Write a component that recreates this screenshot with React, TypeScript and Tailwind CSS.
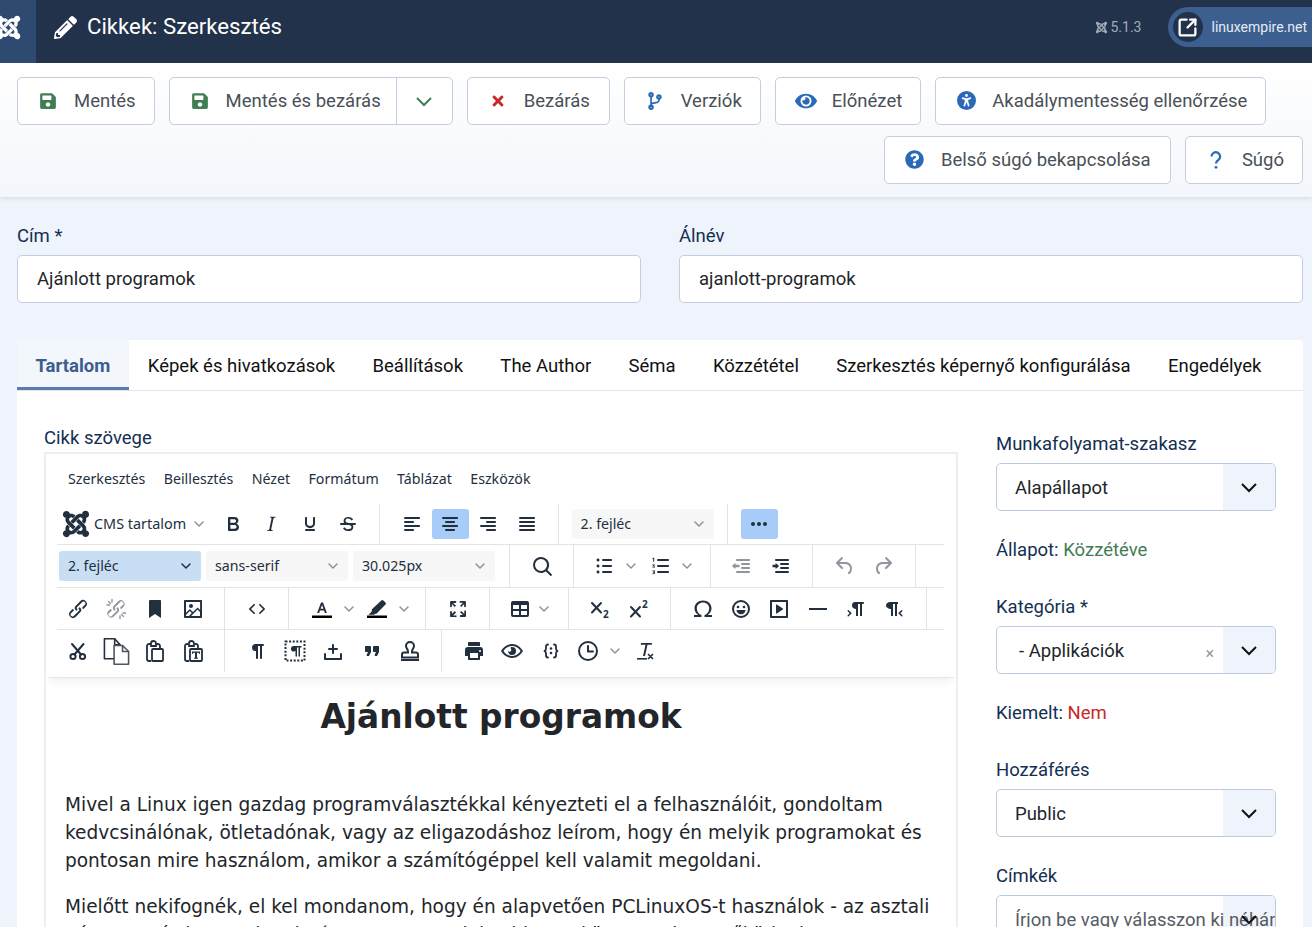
import type {ReactNode} from "react";
import {
    FaJoomla,
    FaPencilAlt,
    FaSave,
    FaTimes,
    FaCodeBranch,
    FaEye,
    FaQuestionCircle,
} from "react-icons/fa";
import {FaUniversalAccess} from "react-icons/fa6";
import {SquareArrowOutUpRight} from "lucide-react";

const INK = "#222f3e";

function Svg({children, size = 24, className}: { children: ReactNode; size?: number; className?: string }) {
    return (
        <svg width={size} height={size} viewBox="0 0 24 24" fill={INK} className={className}>
            {children}
        </svg>
    );
}

function Line({d, w = 2}: { d: string; w?: number }) {
    return <path d={d} fill="none" stroke={INK} strokeWidth={w} strokeLinecap="round" strokeLinejoin="round"/>;
}

const icons: Record<string, ReactNode> = {
    bold: <path d="M7.8 19c-.3 0-.5 0-.6-.2l-.2-.5V5.700c0-.2 0-.4.2-.5l.6-.2h5c1.500 0 2.700.3 3.500 1 .7.6 1.100 1.400 1.100 2.500a3 3 0 0 1-.6 1.900c-.4.6-1 1-1.600 1.200.4.1.9.3 1.300.6s.8.7 1 1.200c.4.4.5 1 .5 1.600 0 1.300-.4 2.300-1.300 3-.8.7-2.100 1-3.800 1H7.800Zm5-8.300c.6 0 1.200-.1 1.600-.5.4-.3.6-.7.6-1.300 0-1.100-.8-1.700-2.300-1.700H9.300v3.500h3.400Zm.5 6c.7 0 1.300-.1 1.700-.4.4-.4.6-.9.6-1.500s-.2-1-.7-1.400c-.4-.3-1-.4-2-.4H9.400v3.800h4Z"/>,
    italic: <path d="M16.700 4.700l-.1.9h-.3c-.6 0-1 0-1.400.3-.3.3-.4.6-.5 1.100l-2.100 9.800v.6c0 .5.400.8 1.400.8h.2l-.2.8H8l.2-.8h.2c1.100 0 1.800-.5 2-1.500l2-9.800.1-.5c0-.6-.4-.8-1.400-.8h-.3l.2-.9h5.800Z"/>,
    underline: <path d="M16 5c.6 0 1 .4 1 1v5.500a4 4 0 0 1-.4 1.800l-1 1.400a5.300 5.300 0 0 1-5.500 1 5 5 0 0 1-1.600-1c-.5-.4-.8-.9-1.100-1.400a4 4 0 0 1-.4-1.800V6c0-.6.4-1 1-1s1 .4 1 1v5.500c0 .3 0 .6.2 1l.6.7a3.300 3.300 0 0 0 2.200.8 3.400 3.400 0 0 0 2.200-.8c.3-.2.4-.5.6-.8l.2-.9V6c0-.6.4-1 1-1ZM8 17h8c.6 0 1 .4 1 1s-.4 1-1 1H8a1 1 0 0 1 0-2Z"/>,
    strike: <path d="M15.600 8.500c-.5-.7-1-1.100-1.300-1.300-.6-.4-1.300-.6-2-.6-2.700 0-2.800 1.700-2.800 2.100 0 1.600 1.800 2 3.200 2.300 4.400.9 4.600 2.800 4.600 3.900 0 1.400-.7 4.100-5 4.100A6.200 6.200 0 0 1 7 16.400l1.500-1.100c.4.6 1.600 2 3.700 2 1.600 0 2.500-.4 3-1.200.4-.8.3-2-.8-2.600-.7-.4-1.600-.7-2.900-1-1-.2-3.900-.8-3.900-3.600C7.600 6 10.300 5 12.400 5c2.900 0 4.200 1.600 4.700 2.400l-1.500 1.100Z M5 11h14a1 1 0 0 1 0 2H5a1 1 0 0 1 0-2Z"/>,
    alignLeft: <path d="M5 5h14c.6 0 1 .4 1 1s-.4 1-1 1H5a1 1 0 1 1 0-2Zm0 4h8c.6 0 1 .4 1 1s-.4 1-1 1H5a1 1 0 1 1 0-2Zm0 8h8c.6 0 1 .4 1 1s-.4 1-1 1H5a1 1 0 0 1 0-2Zm0-4h14c.6 0 1 .4 1 1s-.4 1-1 1H5a1 1 0 0 1 0-2Z"/>,
    alignCenter: <path d="M5 5h14c.6 0 1 .4 1 1s-.4 1-1 1H5a1 1 0 1 1 0-2Zm3 4h8c.6 0 1 .4 1 1s-.4 1-1 1H8a1 1 0 1 1 0-2Zm0 8h8c.6 0 1 .4 1 1s-.4 1-1 1H8a1 1 0 0 1 0-2Zm-3-4h14c.6 0 1 .4 1 1s-.4 1-1 1H5a1 1 0 0 1 0-2Z"/>,
    alignRight: <path d="M5 5h14c.6 0 1 .4 1 1s-.4 1-1 1H5a1 1 0 1 1 0-2Zm6 4h8c.6 0 1 .4 1 1s-.4 1-1 1h-8a1 1 0 0 1 0-2Zm0 8h8c.6 0 1 .4 1 1s-.4 1-1 1h-8a1 1 0 0 1 0-2Zm-6-4h14c.6 0 1 .4 1 1s-.4 1-1 1H5a1 1 0 0 1 0-2Z"/>,
    justify: <path d="M5 5h14c.6 0 1 .4 1 1s-.4 1-1 1H5a1 1 0 1 1 0-2Zm0 4h14c.6 0 1 .4 1 1s-.4 1-1 1H5a1 1 0 1 1 0-2Zm0 4h14c.6 0 1 .4 1 1s-.4 1-1 1H5a1 1 0 0 1 0-2Zm0 4h14c.6 0 1 .4 1 1s-.4 1-1 1H5a1 1 0 0 1 0-2Z"/>,
    more: <path d="M6 10a2 2 0 0 0-2 2c0 1.100.9 2 2 2a2 2 0 0 0 2-2 2 2 0 0 0-2-2Zm12 0a2 2 0 0 0-2 2c0 1.100.9 2 2 2a2 2 0 0 0 2-2 2 2 0 0 0-2-2Zm-6 0a2 2 0 0 0-2 2c0 1.100.9 2 2 2a2 2 0 0 0 2-2 2 2 0 0 0-2-2Z"/>,
    search: <path fillRule="evenodd" d="M16 17.300a8 8 0 1 1 1.400-1.400l4.300 4.400a1 1 0 0 1-1.400 1.400l-4.400-4.300Zm-5-.3a6 6 0 1 0 0-12 6 6 0 0 0 0 12Z"/>,
    bullist: <path d="M11 5h8c.6 0 1 .4 1 1s-.4 1-1 1h-8a1 1 0 0 1 0-2Zm0 6h8c.6 0 1 .4 1 1s-.4 1-1 1h-8a1 1 0 0 1 0-2Zm0 6h8c.6 0 1 .4 1 1s-.4 1-1 1h-8a1 1 0 0 1 0-2ZM4.500 6c0-.4.1-.8.4-1 .3-.4.7-.5 1.100-.5s.8.1 1 .4c.4.3.5.7.5 1.100s-.1.8-.4 1c-.3.4-.7.5-1.100.5s-.8-.1-1-.4c-.4-.3-.5-.7-.5-1.100Zm0 6c0-.4.1-.8.4-1 .3-.4.7-.5 1.100-.5s.8.1 1 .4c.4.3.5.7.5 1.100s-.1.8-.4 1c-.3.4-.7.5-1.100.5s-.8-.1-1-.4c-.4-.3-.5-.7-.5-1.100Zm0 6c0-.4.1-.8.4-1 .3-.4.7-.5 1.100-.5s.8.1 1 .4c.4.3.5.7.5 1.100s-.1.8-.4 1c-.3.4-.7.5-1.100.5s-.8-.1-1-.4c-.4-.3-.5-.7-.5-1.100Z"/>,
    numlist: <>
        <path d="M10 17h10c.6 0 1 .4 1 1s-.4 1-1 1H10a1 1 0 0 1 0-2Zm0-6h10c.6 0 1 .4 1 1s-.4 1-1 1H10a1 1 0 0 1 0-2Zm0-6h10c.6 0 1 .4 1 1s-.4 1-1 1H10a1 1 0 1 1 0-2Z"/>
        <path d="M5.200 3.800h1v4h-1V5l-.8.3v-.8l.8-.5ZM4.300 10.500h2.800v.8H5.700l1.300 1.400v.8H4.300v-.8h1.700L4.300 11Zm0 6h2.800v.8l-1 .8c.7 0 1 .4 1 1 0 .7-.6 1.100-1.500 1.100H4.300v-.8h1.300c.3 0 .5-.1.500-.3s-.2-.3-.5-.3H5v-.7l1-.8H4.300Z"/>
    </>,
    outdent: <path d="M7 5h12c.6 0 1 .4 1 1s-.4 1-1 1H7a1 1 0 1 1 0-2Zm5 4h7c.6 0 1 .4 1 1s-.4 1-1 1h-7a1 1 0 0 1 0-2Zm0 4h7c.6 0 1 .4 1 1s-.4 1-1 1h-7a1 1 0 0 1 0-2Zm-5 4h12a1 1 0 0 1 0 2H7a1 1 0 0 1 0-2Zm-2.300-2.400L2.400 12.500a.7.7 0 0 1 0-1l2.300-2.100c.3-.3.8-.1.8.3v1h4v2.600h-4v1c0 .4-.5.6-.8.3Z"/>,
    indent: <path d="M7 5h12c.6 0 1 .4 1 1s-.4 1-1 1H7a1 1 0 1 1 0-2Zm5 4h7c.6 0 1 .4 1 1s-.4 1-1 1h-7a1 1 0 0 1 0-2Zm0 4h7c.6 0 1 .4 1 1s-.4 1-1 1h-7a1 1 0 0 1 0-2Zm-5 4h12a1 1 0 0 1 0 2H7a1 1 0 0 1 0-2Zm.300-2.400l2.300-2.100a.7.7 0 0 0 0-1L7.300 9.400c-.3-.3-.8-.1-.8.3v1h-3v2.600h3v1c0 .4.500.6.800.3Z"/>,
    undo: <path d="M6.400 8H12c3.700 0 6.200 2 6.800 5.100.6 2.700-.4 5.600-2.300 6.800a1 1 0 0 1-1-1.800c1.100-.6 1.800-2.700 1.400-4.600-.5-2.100-2.100-3.500-4.900-3.500H6.400l3.300 3.300a1 1 0 1 1-1.400 1.400l-5-5a1 1 0 0 1 0-1.400l5-5a1 1 0 0 1 1.400 1.400L6.400 8Z"/>,
    redo: <path d="M17.600 8H12c-3.700 0-6.200 2-6.800 5.100-.6 2.700.4 5.600 2.300 6.800a1 1 0 0 0 1-1.800c-1.100-.6-1.800-2.700-1.400-4.600.5-2.100 2.100-3.500 4.900-3.500h5.600l-3.300 3.300a1 1 0 1 0 1.400 1.400l5-5a1 1 0 0 0 0-1.400l-5-5a1 1 0 0 0-1.400 1.400L17.600 8Z"/>,
    link: <path d="M6.200 12.300a1 1 0 0 1 1.400 1.400l-2 2a2 2 0 1 0 2.600 2.800l4.800-4.800a1 1 0 0 0 0-1.400 1 1 0 1 1 1.400-1.300 2.900 2.900 0 0 1 0 4L9.600 20a3.900 3.900 0 0 1-5.500-5.500l2-2Zm11.600-.6a1 1 0 0 1-1.400-1.400l2-2a2 2 0 1 0-2.600-2.800L11 10.300a1 1 0 0 0 0 1.400A1 1 0 1 1 9.600 13a2.900 2.900 0 0 1 0-4L14.400 4a3.900 3.900 0 0 1 5.500 5.500l-2 2Z"/>,
    unlink: <g opacity="0.5">
        <path d="M6.200 12.300a1 1 0 0 1 1.400 1.400l-2.100 2a2 2 0 1 0 2.700 2.800l4.800-4.800a1 1 0 0 0 0-1.400 1 1 0 1 1 1.400-1.300c1 1.100 1 2.900 0 4l-4.900 4.800a3.900 3.900 0 0 1-5.400-5.500l2-2Zm11.600-.6a1 1 0 0 1-1.400-1.400l2.100-2a2 2 0 1 0-2.700-2.800L11 10.300a1 1 0 0 0 0 1.400A1 1 0 1 1 9.600 13c-1-1.100-1-2.900 0-4L14.400 4a3.900 3.900 0 0 1 5.400 5.500l-2 2Z"/>
        <Line d="M3 8h2.500M8 2.500V5M4.500 4.500L6.500 6.500M17.500 17.500l2 2M16 21.500V19M21.500 16H19" w={1.400}/>
    </g>,
    bookmark: <path d="M6 4v17l6-4 6 4V4c0-.6-.4-1-1-1H7a1 1 0 0 0-1 1Z"/>,
    image: <path fillRule="evenodd" d="M5 15.700l3.300-3.200c.3-.3.7-.3 1 0L12 15l4.100-4c.3-.4.8-.4 1 0l2 1.900V5H5v10.700ZM5 18v1h3l2.800-2.900-2-2L5 17.900Zm14-3l-2.500-2.400-6.400 6.500H19v-4ZM4 3h16c.6 0 1 .4 1 1v16c0 .6-.4 1-1 1H4a1 1 0 0 1-1-1V4c0-.6.4-1 1-1Zm6 8a2 2 0 1 0 0-4 2 2 0 0 0 0 4Z"/>,
    code: <path d="M9.800 15.700c.3.3.3.8 0 1-.3.4-.9.4-1.200 0l-4.400-4.100a.8.8 0 0 1 0-1.200l4.400-4.200c.3-.3.9-.3 1.200 0 .3.3.3.8 0 1.100L6 12l3.800 3.700ZM14.200 15.700c-.3.3-.3.8 0 1 .4.4.9.4 1.200 0l4.400-4.100c.3-.3.3-.9 0-1.200l-4.400-4.200a.8.8 0 0 0-1.200 0c-.3.3-.3.8 0 1.100L18 12l-3.800 3.700Z"/>,
    textColor: <>
        <path fillRule="evenodd" d="M14 13.500H10l-.9 2.400H7.100L11 5.500h2l3.900 10.400h-2L14 13.500Zm-3.400-1.700h2.800L12 8l-1.400 3.800Z"/>
        <rect x="2" y="18.500" width="20" height="2.500" fill="#000"/>
    </>,
    highlight: <>
        <path d="M16.300 3.400a1.400 1.400 0 0 1 2 0l2.200 2.200a1.400 1.400 0 0 1 0 2l-8.800 8.900c-.4.3-1 .4-1.400.2L9 17.800H3.500l3.200-3.200.1-1.500c0-.4.1-.8.4-1.100l9.100-8.600Z"/>
        <rect x="2" y="18.500" width="20" height="2.500" fill="#000"/>
    </>,
    fullscreen: <path d="M15.300 10l-1.200-1.300 2.900-3h-2.300a.9.9 0 1 1 0-1.700H19c.5 0 .9.400.9.900v4.400a.9.900 0 1 1-1.800 0V7l-2.900 3Zm0 4l3 3v-2.300a.9.900 0 1 1 1.700 0V19c0 .5-.4.900-.9.900h-4.400a.9.900 0 1 1 0-1.800H17l-3-2.900 1.300-1.200ZM10 15.400l-2.900 3h2.300a.9.900 0 1 1 0 1.700H5a.9.900 0 0 1-.9-.9v-4.400a.9.900 0 1 1 1.800 0V17l2.900-3 1.200 1.400ZM5.900 7v2.300a.9.900 0 0 1-1.800 0V5c0-.5.400-.9.900-.9h4.400a.9.900 0 1 1 0 1.800H7l3 2.900L8.700 10 5.900 7Z"/>,
    table: <path fillRule="evenodd" d="M19 4a2 2 0 0 1 2 2v12a2 2 0 0 1-2 2H5a2 2 0 0 1-2-2V6c0-1.100.9-2 2-2h14ZM5 14v4h6v-4H5Zm14 0h-6v4h6v-4Zm0-6h-6v4h6V8ZM5 12h6V8H5v4Z"/>,
    sub: <>
        <Line d="M4 6l9 9.500M13 6l-9 9.500"/>
        <text x="15" y="21" fontSize="10" fontWeight="700" fontFamily="Open Sans, sans-serif" fill={INK}>2</text>
    </>,
    sup: <>
        <Line d="M4 10l9 9.500M13 10l-9 9.500"/>
        <text x="15" y="11" fontSize="10" fontWeight="700" fontFamily="Open Sans, sans-serif" fill={INK}>2</text>
    </>,
    omega: <path d="M12 3.500c-4.800 0-8.500 3.200-8.500 7.800 0 2.800 1.300 5 3.500 6.400v.3H3v2h7.500v-2c-2.500-.9-4.700-3.400-4.700-6.600 0-3.400 2.600-5.800 6.200-5.800s6.200 2.400 6.200 5.800c0 3.200-2.200 5.700-4.700 6.600v2H21v-2h-4v-.3c2.200-1.400 3.500-3.600 3.500-6.400 0-4.600-3.700-7.800-8.500-7.800Z"/>,
    emoji: <>
        <circle cx="12" cy="12" r="8" fill="none" stroke={INK} strokeWidth="2"/>
        <circle cx="9" cy="10" r="1.300"/>
        <circle cx="15" cy="10" r="1.300"/>
        <path d="M7.500 13h9c0 2.500-2 4.300-4.500 4.300S7.500 15.500 7.500 13Z"/>
    </>,
    media: <path fillRule="evenodd" d="M4 3h16c.6 0 1 .4 1 1v16c0 .6-.4 1-1 1H4a1 1 0 0 1-1-1V4c0-.6.400-1 1-1Zm1 2v14h14V5H5Zm4.800 2.600l6 4a.5.5 0 0 1 0 .8l-6 4a.5.5 0 0 1-.8-.4V8a.5.5 0 0 1 .8-.4Z"/>,
    hr: <path d="M3 11h18v2H3z"/>,
    ltr: <path d="M11 5h8a1 1 0 0 1 0 2h-1v12h-2V7h-2v12h-2v-7c-2 0-4-1.500-4-3.500S9 5 11 5ZM3.700 14.300a.7.700 0 0 1 1-1l2.600 2.400c.3.300.3.8 0 1.100l-2.600 2.400a.7.700 0 0 1-1-1l1.900-2-1.900-1.900Z"/>,
    rtl: <path d="M6 5h10v2h-1v12h-2V7h-2v12H9v-7c-2 0-5-1.500-5-3.500S6 5 8 5Zm14.300 9.300a.7.700 0 0 0-1-1l-2.600 2.400a.8.800 0 0 0 0 1.100l2.600 2.400a.7.700 0 0 0 1-1l-1.900-2 1.900-1.900Z"/>,
    cut: <>
        <circle cx="7" cy="17.500" r="2.600" fill="none" stroke={INK} strokeWidth="2"/>
        <circle cx="16.500" cy="17.500" r="2.600" fill="none" stroke={INK} strokeWidth="2"/>
        <Line d="M8.500 15.500L17.500 5M15 15.500L6 5"/>
    </>,
    copy: <>
        <path d="M2 1.500h8.500l4.500 5V18H2z" fill="none" stroke={INK} strokeWidth="1.300" strokeLinejoin="round"/>
        <path d="M10.500 1.500V6.500H15" fill="none" stroke={INK} strokeWidth="1.300"/>
        <path d="M10 7h7l5 5v10.500H10z" fill="#fff" stroke="#4b5563" strokeWidth="1.300" strokeLinejoin="round"/>
        <path d="M17 7v5h5" fill="none" stroke="#4b5563" strokeWidth="1.300"/>
    </>,
    paste: <>
        <path d="M8 5H6a2 2 0 0 0-2 2v13a2 2 0 0 0 2 2h2M17 9V7a2 2 0 0 0-2-2h-2" fill="none" stroke={INK} strokeWidth="1.800"/>
        <path d="M8 4.500a2.500 2.500 0 0 1 5 0V7H8V4.500Z" fill="none" stroke={INK} strokeWidth="1.800"/>
        <rect x="9" y="10" width="11" height="12" rx="1" fill="none" stroke={INK} strokeWidth="1.800"/>
    </>,
    pasteText: <>
        <path d="M7 5H6a2 2 0 0 0-2 2v13a2 2 0 0 0 2 2h2M17 9V7a2 2 0 0 0-2-2h-1" fill="none" stroke={INK} strokeWidth="1.800"/>
        <path d="M8 4.500a2.500 2.500 0 0 1 5 0V7H8V4.500Z" fill="none" stroke={INK} strokeWidth="1.800"/>
        <rect x="9" y="10" width="12" height="12" rx="1" fill="none" stroke={INK} strokeWidth="1.800"/>
        <path d="M11 12.500h8v2.200h-1l-.4-1h-1.600v5h1v1h-4v-1h1v-5h-1.600l-.4 1h-1v-2.200Z"/>
    </>,
    para: <path d="M10.500 5H18a1 1 0 0 1 0 2h-1v12a1 1 0 0 1-2 0V7h-2v12a1 1 0 0 1-2 0v-7h-.5A3.500 3.500 0 0 1 7 8.500C7 6.500 8.500 5 10.500 5Z"/>,
    visual: <>
        <path d="M11 7h7a.7.700 0 0 1 0 1.500h-1V17a.7.700 0 0 1-1.500 0V8.500h-1.500V17a.7.700 0 0 1-1.500 0v-5h-.5A2.500 2.500 0 0 1 8 9.500 2.500 2.500 0 0 1 11 7Z"/>
        <rect x="2.500" y="2.500" width="19" height="19" fill="none" stroke={INK} strokeWidth="2" strokeDasharray="2 1.600"/>
    </>,
    insert: <path d="M20 14a1 1 0 0 1 1 1v5a1 1 0 0 1-1 1H4a1 1 0 0 1-1-1v-5a1 1 0 0 1 2 0v4h14v-4a1 1 0 0 1 1-1ZM12 5a1 1 0 0 1 1 1v3h3a1 1 0 0 1 0 2h-3v3a1 1 0 0 1-2 0v-3H8a1 1 0 0 1 0-2h3V6a1 1 0 0 1 1-1Z"/>,
    quote: <path d="M7.500 17h.9c.4 0 .7-.2.900-.6L11 13V8c0-.6-.4-1-1-1H6c-.6 0-1 .4-1 1v4c0 .6.400 1 1 1h2l-1.300 2.700a1 1 0 0 0 .8 1.300Zm8 0h.9c.4 0 .7-.2.900-.6L19 13V8c0-.6-.4-1-1-1h-4c-.6 0-1 .4-1 1v4c0 .6.400 1 1 1h2l-1.300 2.700a1 1 0 0 0 .8 1.300Z"/>,
    stamp: <>
        <path d="M12 3a4 4 0 0 0-4 4c0 1.500 1 2.500 1.500 3.500.4.800.5 1.500.5 3H6a2 2 0 0 0-2 2v3h16v-3a2 2 0 0 0-2-2h-4c0-1.500.1-2.200.5-3C15 9.500 16 8.500 16 7a4 4 0 0 0-4-4Z" fill="none" stroke={INK} strokeWidth="2"/>
        <rect x="3" y="20" width="18" height="2"/>
    </>,
    print: <path fillRule="evenodd" d="M18 8H6a3 3 0 0 0-3 3v6h3v3c0 .6.400 1 1 1h10c.6 0 1-.4 1-1v-3h3v-6a3 3 0 0 0-3-3Zm-2 11H8v-5h8v5Zm3-7a1 1 0 1 1-2 0 1 1 0 0 1 2 0ZM17 3H7c-.6 0-1 .4-1 1v3h12V4c0-.6-.4-1-1-1Z"/>,
    preview: <path fillRule="evenodd" d="M12 5c5 0 9 3.500 11 7-2 3.500-6 7-11 7S3 15.500 1 12c2-3.500 6-7 11-7Zm0 2c-3.700 0-7 2.300-8.600 5 1.600 2.700 4.900 5 8.600 5s7-2.300 8.600-5C19 9.300 15.700 7 12 7Zm0 1a4 4 0 1 1-4 4c.6.900 1.700 1 2.500.5.900-.6 1-1.600.5-2.500-.3-.6-.4-1.200 0-1.900.3-.1.700-.1 1-.1Z"/>,
    codesample: <>
        <Line d="M9 5.500c-1.500 0-2 .7-2 2v2c0 1-.6 2-1.500 2.500.9.500 1.500 1.500 1.500 2.500v2c0 1.300.5 2 2 2M15 5.500c1.500 0 2 .7 2 2v2c0 1 .6 2 1.500 2.500-.9.500-1.500 1.500-1.500 2.500v2c0 1.300-.5 2-2 2" w={1.800}/>
        <circle cx="12" cy="9.500" r="1.300"/>
        <circle cx="12" cy="14" r="1.300"/>
    </>,
    clock: <>
        <circle cx="12" cy="12" r="9" fill="none" stroke={INK} strokeWidth="2"/>
        <Line d="M12 7v5.500h5"/>
    </>,
    clear: <>
        <path d="M9 4h11l-.3 1.800h-4.200L13 17h-2L13.500 5.800H8.700L9 4Z"/>
        <rect x="5" y="19" width="10" height="1.600"/>
        <Line d="M16.500 15.500l4 4M20.500 15.500l-4 4" w={1.700}/>
    </>,
};

function TinyChevron({dark}: { dark?: boolean }) {
    return (
        <svg width="10" height="10" viewBox="0 0 10 10" className="shrink-0">
            <path d="M1 3l4 4 4-4" fill="none" stroke={dark ? INK : "#8b939c"} strokeWidth="1.500" strokeLinecap="round"
                  strokeLinejoin="round"/>
        </svg>
    );
}

function Btn({name, active, dim, size}: { name: string; active?: boolean; dim?: boolean; size?: number }) {
    return (
        <div className={`flex h-[30px] w-[38.3px] shrink-0 items-center justify-center ${dim ? "opacity-50" : ""}`}>
            <div className={`flex h-[30px] w-[37px] items-center justify-center rounded-[3px] ${active ? "bg-[#a6ccf7]" : ""}`}>
                <Svg size={size}>{icons[name]}</Svg>
            </div>
        </div>
    );
}

// ikon + kis nyíl, a szélességek soronként mások
function Split({name, width, iconWidth, chevGap}: { name: string; width: string; iconWidth: string; chevGap: string }) {
    return (
        <div className={`flex h-[30px] shrink-0 items-center ${width}`}>
            <div className={`flex justify-center ${iconWidth}`}><Svg>{icons[name]}</Svg></div>
            <div className={chevGap}><TinyChevron/></div>
        </div>
    );
}

function Group({children, last, first}: { children: ReactNode; last?: boolean; first?: boolean }) {
    const pad = first ? "pl-[2px] pr-[12px]" : "px-[12.4px]";
    return (
        <div className={`flex h-full items-center ${pad} ${last ? "" : "border-r border-[#e3e3e3]"}`}>
            {children}
        </div>
    );
}

function TinySelect({label, width, active}: { label: string; width: string; active?: boolean }) {
    return (
        <div className={`flex h-[30px] shrink-0 items-center justify-between rounded-[3px] px-[9px] text-[14.2px] ${width} ${active ? "bg-[#c8def4]" : "bg-[#f7f7f7]"}`}>
            <span>{label}</span>
            <span className="pr-[1px]"><TinyChevron dark={active}/></span>
        </div>
    );
}

function ToolButton({icon, label, className = ""}: { icon: ReactNode; label: string; className?: string }) {
    return (
        <div className={`flex h-[48px] items-center rounded-[5px] border border-[#c4cede] bg-white pl-[10px] pr-[18px] text-[18.5px] text-[#495057] ${className}`}>
            <div className="-mt-[1px] mr-[6px] flex w-[40px] justify-center">{icon}</div>
            <span className="pt-[2px]">{label}</span>
        </div>
    );
}

function Field({label, value}: { label: string; value: string }) {
    return (
        <div className="flex-1">
            <div className="mb-[6px] h-[26px] text-[18.5px] leading-[26px] text-[#132f53]">{label}</div>
            <div className="flex h-[48px] items-center rounded-[5px] border border-[#c4cede] bg-white px-[19px] pt-[1px] text-[18.5px] text-[#22262a]">
                {value}
            </div>
        </div>
    );
}

function Select({value, clear, placeholder}: { value: string; clear?: boolean; placeholder?: boolean }) {
    return (
        <div className="relative flex h-[48px] items-center overflow-hidden rounded-[5px] border border-[#bccadf] bg-white pt-[2px] text-[18.5px] text-[#22262a]">
            <div className="absolute right-0 top-0 flex h-full w-[52px] items-center justify-center bg-[#eff3fb]">
                <svg width="18" height="18" viewBox="0 0 18 18" className="relative z-[2]"><path d="M2 6l7 7 7-7" fill="none" stroke="#111" strokeWidth="2"/></svg>
            </div>
            <span className={`relative z-[1] flex-1 whitespace-nowrap ${clear ? "pl-[22px]" : "pl-[18px]"} ${placeholder ? "text-[#555c64]" : ""}`}>{value}</span>
            {clear && <span className="absolute right-[61px] top-[19px] text-[16px] leading-[16px] text-[#999]">×</span>}
        </div>
    );
}

const tabs = ["Képek és hivatkozások", "Beállítások", "The Author", "Séma", "Közzététel", "Szerkesztés képernyő konfigurálása", "Engedélyek"];

export default function App() {
    return (
        <div className="h-[927px] overflow-hidden bg-[#eff3fb] font-['Roboto',sans-serif]">
            {/* fejléc */}
            <header className="flex h-[63px] items-center overflow-hidden bg-[#22324b] pb-[9px]">
                <div className="-mb-[9px] flex w-[36px] shrink-0 items-center self-stretch overflow-hidden bg-[#2e4a70] pb-[9px]">
                    <FaJoomla className="-ml-[5px] shrink-0 text-white" size={27}/>
                </div>
                <FaPencilAlt className="ml-[18px] text-white" size={23}/>
                <div className="ml-[10px] flex-1 text-[22.2px] text-white">Cikkek: Szerkesztés</div>
                <div className="flex items-center gap-[3px] text-[14px] text-[#a3abb8]">
                    <FaJoomla size={13}/>
                    <span>5.1.3</span>
                </div>
                <div className="-mr-[20px] ml-[26px] flex h-[40px] items-center gap-[9px] rounded-[20px] bg-[#3c5f8f] pl-[5px] pr-[25px] text-[14px] text-[#e6ebf3]">
                    <div className="flex h-[30px] w-[30px] items-center justify-center rounded-full bg-[#22324b]">
                        <SquareArrowOutUpRight size={21} strokeWidth={2.6} className="text-white"/>
                    </div>
                    <span>linuxempire.net</span>
                </div>
            </header>

            {/* gombsor */}
            <div className="flex h-[134px] flex-wrap content-start gap-x-[14px] gap-y-[11px] bg-gradient-to-b from-white to-[#f3f6fb] pl-[17px] pr-[9px] pt-[14px] shadow-[0_2px_4px_rgba(50,80,130,0.12)]">
                <ToolButton icon={<FaSave size={18} className="text-[#3f7d53]"/>} label="Mentés"/>
                <div className="flex h-[48px] rounded-[5px] border border-[#c4cede] bg-white text-[18.5px] text-[#495057]">
                    <div className="flex items-center border-r border-[#c4cede] pl-[10px] pr-[15px]">
                        <div className="-mt-[1px] mr-[6px] flex w-[40px] justify-center"><FaSave size={18} className="text-[#3f7d53]"/></div>
                        <span className="pt-[2px]">Mentés és bezárás</span>
                    </div>
                    <div className="flex w-[55px] items-center justify-center">
                        <svg width="18" height="18" viewBox="0 0 18 18"><path d="M2 6l7 7 7-7" fill="none" stroke="#3f7d53" strokeWidth="2"/></svg>
                    </div>
                </div>
                <ToolButton className="w-[143px]" icon={<FaTimes size={16} className="text-[#c92828]"/>} label="Bezárás"/>
                <ToolButton icon={<FaCodeBranch size={18} className="text-[#2a69b8]"/>} label="Verziók"/>
                <ToolButton icon={<FaEye size={22} className="text-[#2a69b8]"/>} label="Előnézet"/>
                <ToolButton icon={<FaUniversalAccess size={19} className="text-[#2a69b8]"/>} label="Akadálymentesség ellenőrzése"/>
                <ToolButton className="ml-auto w-[287px]" icon={<FaQuestionCircle size={19} className="text-[#2a69b8]"/>} label="Belső súgó bekapcsolása"/>
                <ToolButton
                    icon={
                        <svg width="12" height="18" viewBox="0 0 12 18">
                            <path d="M1.500 5.500a4.300 4.300 0 1 1 6.800 3.500C6.800 10 6 11 6 12.500" fill="none" stroke="#2a69b8" strokeWidth="2.200"/>
                            <circle cx="6" cy="16.300" r="1.400" fill="#2a69b8"/>
                        </svg>
                    }
                    label="Súgó"/>
            </div>

            <div className="pl-[17px] pr-[9px]">
                {/* cím és álnév */}
                <div className="flex gap-[38px] pt-[26px]">
                    <Field label="Cím *" value="Ajánlott programok"/>
                    <Field label="Álnév" value="ajanlott-programok"/>
                </div>

                {/* fülek */}
                <div className="mt-[37px] rounded-t-[4px] bg-white">
                    <div className="flex h-[51px] border-b border-[#dfe6f2] text-[18.5px] text-[#111]">
                        <div className="flex h-[50px] items-center border-b-[3px] border-[#5b7ca8] bg-[#f3f6fa] px-[18.5px] pt-[7px] font-bold text-[#3a5e8e]">Tartalom</div>
                        <div className="ml-[19px] flex items-center gap-[37.3px] pt-[4px]">
                            {tabs.map(tab => <span key={tab}>{tab}</span>)}
                        </div>
                    </div>

                    <div className="flex gap-[38px] px-[27px]">
                        {/* szerkesztő */}
                        <div className="w-[914px] shrink-0 pt-[34px]">
                            <div className="h-[26px] text-[18.5px] leading-[26px] text-[#132f53]">Cikk szövege</div>
                            <div className="mt-[1px] border-2 border-[#eeeeee] font-['Noto_Sans',sans-serif] text-[#222f3e]">
                                <div className="relative z-[1] bg-white pl-[11px] shadow-[0_2px_2px_-2px_rgba(34,47,62,0.2),0_8px_8px_-4px_rgba(34,47,62,0.07)]">
                                    <div className="flex h-[48px] items-center gap-[18.4px] pl-[11px] pt-[2px] text-[14.2px]">
                                        {["Szerkesztés", "Beillesztés", "Nézet", "Formátum", "Táblázat", "Eszközök"].map(m => <span key={m}>{m}</span>)}
                                    </div>

                                    <div className="mr-[12px] flex h-[43px] items-center border-b border-[#e3e3e3] pt-[2px]">
                                        <Group first>
                                            <div className="flex w-[145px] items-center whitespace-nowrap pl-[2px] text-[14.4px]">
                                                <FaJoomla size={30} color={INK} className="shrink-0"/>
                                                <span className="ml-[3px]">CMS tartalom</span>
                                                <span className="ml-[8px]"><TinyChevron/></span>
                                            </div>
                                            <div className="ml-[10px] flex">
                                                <Btn name="bold"/><Btn name="italic"/><Btn name="underline"/><Btn name="strike"/>
                                            </div>
                                        </Group>
                                        <Group>
                                            <Btn name="alignLeft"/><Btn name="alignCenter" active/><Btn name="alignRight"/><Btn name="justify"/>
                                        </Group>
                                        <Group><div className="mr-[1px]"><TinySelect label="2. fejléc" width="w-[142px]"/></div></Group>
                                        <Group last><Btn name="more" active/></Group>
                                    </div>

                                    <div className="mr-[12px] flex h-[43px] items-center border-b border-[#e3e3e3]">
                                        <div className="flex h-full items-center gap-[5px] border-r border-[#e3e3e3] pl-[2px] pr-[14px]">
                                            <TinySelect label="2. fejléc" width="w-[142px]" active/>
                                            <TinySelect label="sans-serif" width="w-[142px]"/>
                                            <TinySelect label="30.025px" width="w-[142px]"/>
                                        </div>
                                        <Group><Btn name="search"/></Group>
                                        <Group>
                                            <Split name="bullist" width="w-[55.5px]" iconWidth="w-[36px]" chevGap="ml-[4px]"/>
                                            <Split name="numlist" width="w-[55.5px]" iconWidth="w-[36px]" chevGap="ml-[4px]"/>
                                        </Group>
                                        <Group><Btn name="outdent" dim/><Btn name="indent"/></Group>
                                        <Group><Btn name="undo" dim/><Btn name="redo" dim/></Group>
                                    </div>

                                    <div className="mr-[12px] flex h-[42px] items-center border-b border-[#e3e3e3]">
                                        <Group first><Btn name="link"/><Btn name="unlink"/><Btn name="bookmark"/><Btn name="image"/></Group>
                                        <Group><Btn name="code"/></Group>
                                        <Group>
                                            <Split name="textColor" width="w-[55.5px]" iconWidth="w-[40px]" chevGap="ml-[2px]"/>
                                            <Split name="highlight" width="w-[55.5px]" iconWidth="w-[40px]" chevGap="ml-[2px]"/>
                                        </Group>
                                        <Group><Btn name="fullscreen"/></Group>
                                        <Group><Split name="table" width="w-[53px]" iconWidth="w-[34px]" chevGap="ml-[2px]"/></Group>
                                        <Group><Btn name="sub"/><Btn name="sup"/></Group>
                                        <Group>
                                            <Btn name="omega"/><Btn name="emoji"/><Btn name="media"/><Btn name="hr"/><Btn name="ltr"/><Btn name="rtl"/>
                                        </Group>
                                    </div>

                                    <div className="mr-[12px] flex h-[42px] items-center">
                                        <Group first>
                                            <Btn name="cut"/><Btn name="copy" size={29}/><Btn name="paste"/><Btn name="pasteText"/>
                                        </Group>
                                        <Group>
                                            <Btn name="para"/><Btn name="visual"/><Btn name="insert"/><Btn name="quote"/><Btn name="stamp"/>
                                        </Group>
                                        <Group last>
                                            <Btn name="print"/><Btn name="preview"/><Btn name="codesample"/>
                                            <Split name="clock" width="w-[55px]" iconWidth="w-[36px]" chevGap="ml-[4px]"/>
                                            <Btn name="clear"/>
                                        </Group>
                                    </div>
                                    <div className="h-[5px]"/>
                                </div>

                                <div className="bg-white px-[19px] font-['DejaVu_Sans',sans-serif] text-[#22262a]">
                                    <h2 className="pt-[21px] text-center text-[32.8px] font-bold leading-[39px]">Ajánlott programok</h2>
                                    <p className="mt-[54px] text-[18.55px] leading-[28px]">
                                        Mivel a Linux igen gazdag programválasztékkal kényezteti el a felhasználóit, gondoltam kedvcsinálónak, ötletadónak, vagy az eligazodáshoz leírom, hogy én melyik programokat és pontosan mire használom, amikor a számítógéppel kell valamit megoldani.
                                    </p>
                                    <p className="mt-[18px] text-[18.55px] leading-[28px]">
                                        Mielőtt nekifognék, el kel mondanom, hogy én alapvetően PCLinuxOS-t használok - az asztali gépemen és laptopokon is, így a programok is ebben a környezetben működnek.
                                    </p>
                                </div>
                            </div>
                        </div>

                        {/* oldalsáv */}
                        <div className="w-[280px] shrink-0 pt-[40px] text-[18.5px] leading-[26px] text-[#132f53]">
                            <div className="mb-[6px]">Munkafolyamat-szakasz</div>
                            <Select value="Alapállapot"/>
                            <div className="mt-[26px]">Állapot: <span className="text-[#3f7d53]">Közzétéve</span></div>
                            <div className="mb-[6px] mt-[31px]">Kategória *</div>
                            <Select value="- Applikációk" clear/>
                            <div className="mt-[26px]">Kiemelt: <span className="text-[#c92828]">Nem</span></div>
                            <div className="mb-[6px] mt-[31px]">Hozzáférés</div>
                            <Select value="Public"/>
                            <div className="mb-[6px] mt-[26px]">Címkék</div>
                            <Select value="Írjon be vagy válasszon ki néhány címkét" placeholder/>
                        </div>
                    </div>
                </div>
            </div>
        </div>
    );
}
